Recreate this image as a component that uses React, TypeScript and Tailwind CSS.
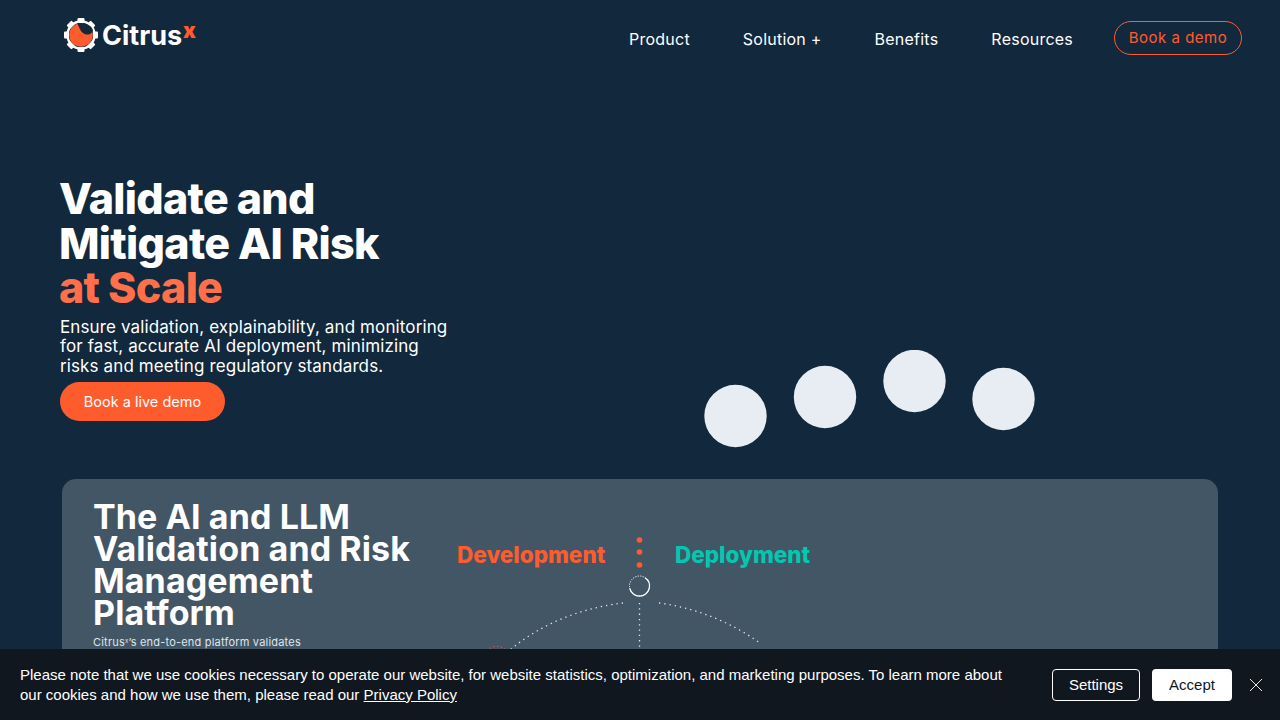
const sans = "font-['Inter','Noto_Sans',sans-serif]";

function Logo() {
  const teeth = [0, 45, 90, 135, 180, 225, 270, 315];
  return (
    <div className="flex items-center">
      <svg width="36" height="36" viewBox="0 0 36 36" className="shrink-0">
        {teeth.map((a) => (
          <rect key={a} x="14.5" y="1" width="7" height="5" rx="1" fill="#fff" transform={`rotate(${a} 18 18)`} />
        ))}
        <circle cx="18" cy="18" r="13.5" fill="none" stroke="#fff" strokeWidth="2.4" />
        <circle cx="18" cy="18" r="11.8" fill="#ff5c2e" />
        <path d="M14 6.500C16 9 17 14 20.300 16.300 23 18 28.500 19 30 13 28 8 22 5 14 6.500Z" fill="#12283d" />
      </svg>
      <span className={`${sans} ml-[3px] text-[27px] leading-none font-bold tracking-[0px] text-white`}>Citrus</span>
      <span className={`${sans} -mt-[10px] ml-[1px] text-[21px] leading-none font-black text-[#ff5c2e]`}>x</span>
    </div>
  );
}

function Header() {
  const items = ["Product", "Solution +", "Benefits", "Resources"];
  return (
    <header className="flex h-[78px] items-start justify-between pr-[38px] pl-[63px]">
      <div className="pt-[17px]">
        <Logo />
      </div>
      <nav className="flex items-center pt-[20px]">
        <div className={`${sans} flex gap-[53px] pt-[2px] text-[16px] tracking-[0.23px] text-white`}>
          {items.map((item) => (
            <a key={item} className="leading-[34px] whitespace-nowrap">{item}</a>
          ))}
        </div>
        <a className={`${sans} ml-[41px] flex h-[34px] w-[128px] items-center justify-center rounded-[17px] border border-[#ff5c2e] pt-[1px] text-[15px] tracking-[0.5px] text-[#ff5c2e]`}>
          Book a demo
        </a>
      </nav>
    </header>
  );
}

function Hero() {
  return (
    <section className="flex h-[401px] pl-[60px]">
      <div className="w-[400px] shrink-0 pt-[98px]">
        <h1 className={`${sans} -ml-[1px] text-[43px] leading-[44.500px] font-extrabold tracking-[-0.7px] text-white`}>
          Validate and
          <br />
          Mitigate AI Risk
          <br />
          <span className="text-[#ff6f4a]">at Scale</span>
        </h1>
        <p className={`${sans} mt-[8px] w-[400px] text-[17px] leading-[19.500px] tracking-[0.12px] text-white`}>
          Ensure validation, explainability, and monitoring
          <br />
          for fast, accurate AI deployment, minimizing
          <br />
          risks and meeting regulatory standards.
        </p>
        <a className={`${sans} mt-[6px] flex h-[39px] w-[165px] items-center justify-center rounded-[20px] bg-[#ff5c2e] text-[14.500px] text-white`}>
          Book a live demo
        </a>
      </div>
      {/* loading dots of the hero animation */}
      <svg width="400" height="120" viewBox="0 0 400 120" className="mt-[272px] ml-[230px] shrink-0">
        <circle cx="45.500" cy="66" r="31.200" fill="#e8edf4" />
        <circle cx="135" cy="47" r="31.200" fill="#e8edf4" />
        <circle cx="224.500" cy="31" r="31.200" fill="#e8edf4" />
        <circle cx="313.500" cy="49" r="31.200" fill="#e8edf4" />
      </svg>
    </section>
  );
}

function PlatformCard() {
  return (
    <section className="mx-[62px] flex h-[300px] gap-[34px] rounded-t-[14px] bg-[#435666] pt-[22px] pl-[31px]">
      <div className="w-[330px] shrink-0">
        <h2 className={`${sans} text-[34px] leading-[32px] font-bold tracking-[0.1px] text-white`}>
          The AI and LLM
          <br />
          Validation and Risk
          <br />
          Management
          <br />
          Platform
        </h2>
        <p className={`${sans} mt-[6px] text-[11px] leading-[14px] tracking-[0.2px] text-[#dfe5ea]`}>
          Citrus<sup className="text-[6px]">x</sup>’s end-to-end platform validates
        </p>
      </div>
      <div className="relative h-[180px] w-[360px] shrink-0">
        <div className={`${sans} absolute top-[40px] left-0 text-[22.500px] leading-[28px] font-extrabold text-[#ff5c2e]`}>Development</div>
        <div className={`${sans} absolute top-[40px] left-[218px] text-[22.500px] leading-[28px] font-extrabold text-[#00c9b1]`}>Deployment</div>
        <svg width="360" height="180" viewBox="0 0 360 180" className="absolute top-0 left-0">
          <circle cx="182.500" cy="39" r="2.800" fill="#ff5c2e" />
          <circle cx="182.500" cy="51" r="2.800" fill="#ff5c2e" />
          <circle cx="182.500" cy="64" r="2.800" fill="#ff5c2e" />
          <circle cx="182.500" cy="85" r="10" fill="none" stroke="#fff" strokeWidth="1" strokeDasharray="1.200 1.300" />
          <path d="M172.800 87.500a10 10 0 0 0 19.400 0 10 10 0 0 0-4.200-10.800" fill="none" stroke="#fff" strokeWidth="1.200" />
          <path d="M166 102C125 107 85 122 53 149" fill="none" stroke="#e6eaee" strokeWidth="1.300" strokeDasharray="1.300 4" />
          <path d="M202 102C240 107 275 122 303 142" fill="none" stroke="#e6eaee" strokeWidth="1.300" strokeDasharray="1.300 4" />
          <path d="M182.500 102V148" fill="none" stroke="#e6eaee" strokeWidth="1.300" strokeDasharray="1.300 4" />
          <path d="M30 150a13 13 0 0 1 20 0" fill="none" stroke="#ff5c2e" strokeWidth="1" strokeDasharray="1.300 2.500" />
        </svg>
      </div>
    </section>
  );
}

function CookieBar() {
  return (
    <div className="fixed inset-x-0 bottom-0 flex h-[71px] items-center bg-[#10171f] pr-[16px] pl-[20px] font-['Liberation_Sans',Arial,sans-serif] text-[15px] leading-[20px] text-white">
      <p className="w-[1000px] shrink-0">
        Please note that we use cookies necessary to operate our website, for website statistics, optimization, and marketing purposes. To learn more about our cookies and how we use them, please read our <a className="underline">Privacy Policy</a>
      </p>
      <button className="ml-[32px] h-[32px] w-[88px] rounded-[4px] border border-white text-white">Settings</button>
      <button className="ml-[12px] h-[32px] w-[80px] rounded-[4px] bg-white text-[#10171f]">Accept</button>
      <button className="ml-[16px]" aria-label="Close">
        <svg width="16" height="16" viewBox="0 0 16 16" className="block">
          <path d="M2 2l12 12M14 2L2 14" stroke="#fff" strokeWidth="0.900" fill="none" />
        </svg>
      </button>
    </div>
  );
}

export default function App() {
  return (
    <div className="h-[720px] overflow-hidden bg-[#12283d]">
      <Header />
      <Hero />
      <PlatformCard />
      <CookieBar />
    </div>
  );
}
